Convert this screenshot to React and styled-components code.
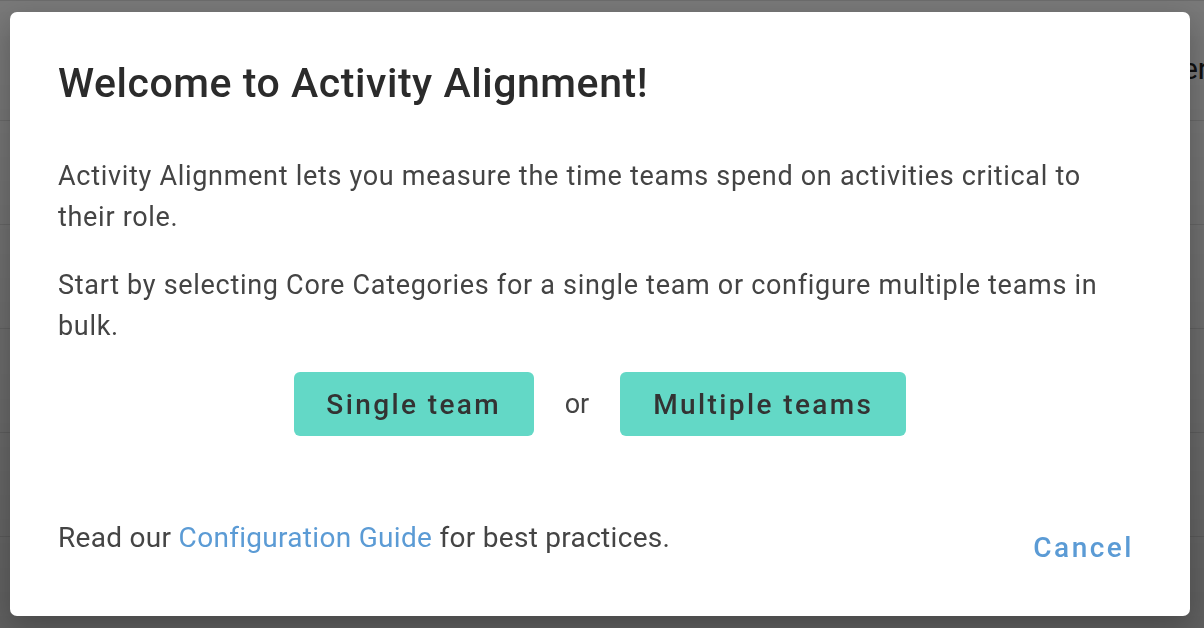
import React from 'react';
import styled, { createGlobalStyle } from 'styled-components';

const GlobalStyle = createGlobalStyle`
	html, body {
		margin: 0;
		padding: 0;
		width: 1204px;
		height: 628px;
		overflow: hidden;
		font-family: Roboto, "Liberation Sans", sans-serif;
	}
`;

const Page = styled.div`
	width: 1204px;
	height: 628px;
	background: #fff;
	display: flex;
	flex-direction: column;
	padding-top: 16px;
	box-sizing: border-box;
	border-top: 1px solid #e4e4e4;
`;

const Row = styled.div`
	height: 104px;
	flex-shrink: 0;
	border-bottom: 1px solid #e4e4e4;
	display: flex;
	align-items: center;
	justify-content: flex-end;
	box-sizing: border-box;
	font-size: 30px;
	color: #222;
	overflow: hidden;
`;

const HeaderText = styled.span`
	margin-right: -4px;
`;

const Overlay = styled.div`
	position: fixed;
	inset: 0;
	background: linear-gradient(to bottom, rgba(0, 0, 0, 0.53), rgba(0, 0, 0, 0.63));
	display: flex;
	align-items: flex-start;
	justify-content: flex-start;
	padding: 12px 0 0 10px;
`;

const Modal = styled.div`
	width: 1180px;
	height: 604px;
	background: #fff;
	border-radius: 7px;
	box-sizing: border-box;
	padding: 47px 48px 0 48px;
	display: flex;
	flex-direction: column;
	box-shadow: 0 10px 30px rgba(0, 0, 0, 0.25);
`;

const Title = styled.h1`
	margin: 0;
	font-size: 41px;
	line-height: 48px;
	font-weight: 500;
	color: #2b2b2b;
	letter-spacing: 0.55px;
`;

const Body = styled.div`
	margin-top: 49px;
`;

const Paragraph = styled.p`
	margin: 0 0 27px 0;
	font-size: 27px;
	line-height: 41px;
	color: #444;
	letter-spacing: 0.7px;

	&:last-child {
		margin-bottom: 0;
	}
`;

const Choices = styled.div`
	display: flex;
	justify-content: center;
	align-items: center;
	gap: 31px;
	margin-top: 25px;
`;

const ChoiceButton = styled.button`
	height: 64px;
	width: ${(p) => p.width}px;
	border: none;
	border-radius: 6px;
	background: #63d8c6;
	color: #333;
	font-family: Roboto, "Liberation Sans", sans-serif;
	font-size: 28px;
	font-weight: 500;
	letter-spacing: 2.4px;
	cursor: pointer;
`;

const Or = styled.span`
	font-size: 27px;
	color: #444;
`;

const Footer = styled.div`
	margin-top: auto;
	margin-bottom: 48px;
	display: flex;
	justify-content: space-between;
	align-items: flex-start;
`;

const FooterText = styled.p`
	margin: 0;
	font-size: 28px;
	line-height: 41px;
	color: #444;
	letter-spacing: 0.3px;
`;

const GuideLink = styled.a`
	color: #5b9bd5;
	text-decoration: none;
`;

const CancelButton = styled.button`
	background: none;
	border: none;
	padding: 0;
	margin-top: 10px;
	margin-right: 8px;
	font-family: Roboto, "Liberation Sans", sans-serif;
	font-size: 28px;
	line-height: 41px;
	font-weight: 500;
	letter-spacing: 2.5px;
	color: #5b9bd5;
	cursor: pointer;
`;

const App = () => {
	return (
		<>
			<GlobalStyle />
			<Page>
				<Row>
					<HeaderText>er</HeaderText>
				</Row>
				<Row />
				<Row />
				<Row />
				<Row />
				<Row />
			</Page>
			<Overlay>
				<Modal>
					<Title>Welcome to Activity Alignment!</Title>
					<Body>
						<Paragraph>
							Activity Alignment lets you measure the time teams spend on activities critical to their role.
						</Paragraph>
						<Paragraph>
							Start by selecting Core Categories for a single team or configure multiple teams in bulk.
						</Paragraph>
					</Body>
					<Choices>
						<ChoiceButton width={240}>Single team</ChoiceButton>
						<Or>or</Or>
						<ChoiceButton width={286}>Multiple teams</ChoiceButton>
					</Choices>
					<Footer>
						<FooterText>
							Read our <GuideLink href="#">Configuration Guide</GuideLink> for best practices.
						</FooterText>
						<CancelButton>Cancel</CancelButton>
					</Footer>
				</Modal>
			</Overlay>
		</>
	);
};

export default App;
